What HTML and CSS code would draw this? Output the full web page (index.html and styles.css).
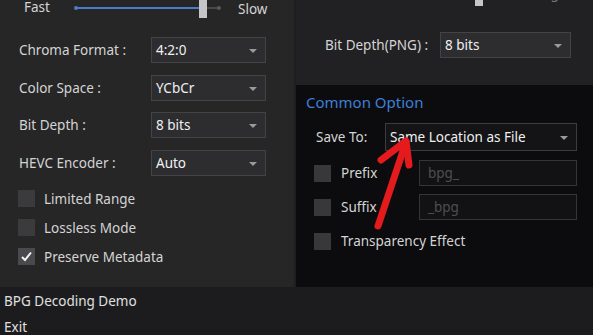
FILE: index.html
```html
<!DOCTYPE html>
<html>
<head>
<meta charset="utf-8">
<link rel="stylesheet" href="styles.css">
</head>
<body>
<div class="app">
  <div class="main">
    <div class="left">
      <div class="speed">
        <span class="fast">Fast</span>
        <div class="slider">
          <div class="track-blue"></div>
          <div class="thumb"></div>
          <div class="track-gray"></div>
          <div class="dot"></div>
        </div>
        <span class="slow">Slow</span>
      </div>
      <div class="form">
        <div class="row"><span class="label">Chroma Format :</span><div class="combo"><span>4:2:0</span><i class="caret"></i></div></div>
        <div class="row"><span class="label">Color Space :</span><div class="combo"><span>YCbCr</span><i class="caret"></i></div></div>
        <div class="row"><span class="label">Bit Depth :</span><div class="combo"><span>8 bits</span><i class="caret"></i></div></div>
        <div class="row"><span class="label">HEVC Encoder :</span><div class="combo"><span>Auto</span><i class="caret"></i></div></div>
      </div>
      <div class="checks">
        <div class="check"><span class="box"></span><span>Limited Range</span></div>
        <div class="check"><span class="box"></span><span>Lossless Mode</span></div>
        <div class="check"><span class="box checked"><svg viewBox="0 0 17 17" width="17" height="17"><path d="M4 9 L7 12 L13 4.5" fill="none" stroke="#f2f2f2" stroke-width="2"/></svg></span><span>Preserve Metadata</span></div>
      </div>
    </div>
    <div class="sep"></div>
    <div class="right">
      <div class="png">
        <div class="quality">
          <span class="lh low">Low</span>
          <div class="qthumb"></div>
          <span class="lh high">High</span>
        </div>
        <div class="row png-row"><span class="label png-label">Bit Depth(PNG) :</span><div class="combo wide"><span>8 bits</span><i class="caret"></i></div></div>
      </div>
      <div class="common">
        <div class="title">Common Option</div>
        <div class="save-row"><span class="save-label">Save To:</span><div class="combo dark"><span>Same Location as File</span><i class="caret"></i></div></div>
        <div class="opt-row"><span class="box"></span><span class="opt-label">Prefix</span><div class="input">bpg_</div></div>
        <div class="opt-row"><span class="box"></span><span class="opt-label">Suffix</span><div class="input">_bpg</div></div>
        <div class="opt-row"><span class="box"></span><span class="opt-label free">Transparency Effect</span></div>
      </div>
    </div>
  </div>
  <div class="menu">
    <div class="item">BPG Decoding Demo</div>
    <div class="item">Exit</div>
  </div>
  <svg class="arrow" width="593" height="335" viewBox="0 0 593 335">
    <path d="M378 226 L406 142" stroke="#e41a1c" stroke-width="7" stroke-linecap="round" fill="none"/>
    <path d="M381 160 L406 141 L409 165" stroke="#e41a1c" stroke-width="7" stroke-linecap="round" stroke-linejoin="round" fill="none"/>
  </svg>
</div>
</body>
</html>
```
FILE: styles.css
```css
* { box-sizing: border-box; }
html, body { margin: 0; padding: 0; }
body {
  width: 593px;
  height: 335px;
  overflow: hidden;
  background: #1c1c1e;
  font-family: "Noto Sans", "Open Sans", sans-serif;
  font-size: 13.5px;
  color: #d4d4d4;
}
.app { position: relative; width: 593px; height: 335px; }
.main { display: flex; height: 287px; }
.left { width: 294px; background: #262627; padding: 0 0 0 18px; }
.sep { width: 2px; background: #1e1e1f; }
.right { flex: 1; display: flex; flex-direction: column; }

.speed { display: flex; align-items: flex-start; height: 37px; }
.fast { margin: -2px 0 0 6px; width: 52px; }
.slider { position: relative; width: 146px; height: 18px; margin-top: 0; }
.track-blue { position: absolute; left: 0; top: 7px; width: 124px; height: 2px; background: #4a7bc8; }
.slider::before { content: ""; position: absolute; left: -2px; top: 6px; width: 4px; height: 4px; border-radius: 50%; background: #4a7bc8; }
.thumb { position: absolute; left: 123px; top: -1px; width: 8px; height: 19px; background: #c6c6c8; }
.track-gray { position: absolute; left: 131px; top: 7px; width: 12px; height: 2px; background: #4a4a4c; }
.dot { position: absolute; left: 141px; top: 6px; width: 4px; height: 4px; border-radius: 50%; background: #5a5a5c; }
.slow { margin: 0 0 0 16px; }

.form { display: flex; flex-direction: column; gap: 11.5px; }
.row { display: flex; align-items: center; height: 26px; }
.label { width: 133px; padding-left: 1px; }
.combo {
  position: relative;
  width: 115px; height: 26px;
  background: #2d2d30;
  border: 1px solid #434346;
  color: #f0f0f0;
  display: flex; align-items: center;
  padding-left: 4px;
  white-space: nowrap;
}
.caret {
  position: absolute; right: 8px; top: 11px;
  width: 0; height: 0;
  border-left: 4px solid transparent; border-right: 4px solid transparent;
  border-top: 4px solid #9a9a9c;
}

.checks { display: flex; flex-direction: column; gap: 11px; margin-top: 14px; }
.check { display: flex; align-items: center; height: 18px; gap: 9px; }
.box { width: 17px; height: 17px; background: #3b3b3d; flex: none; display: block; }
.box.checked { background: #4a4a4c; }
.box svg { display: block; }

.png { height: 85px; background: #212123; }
.quality { display: flex; height: 8px; align-items: flex-start; padding-left: 27px; }
.lh { color: #7a7a7c; margin-top: -16px; line-height: 19px; }
.low { width: 25px; }
.qthumb { width: 8px; height: 28px; background: #c6c6c8; margin: -22px 0 0 127px; }
.high { margin-left: 54px; }
.png-row { margin: 24px 0 0 28px; }
.png-label { width: 116px; }
.combo.wide { width: 131px; }

.common { flex: 1; background: #0c0c0e; padding: 7px 0 0 10px; }
.title { color: #3f7fd6; font-size: 15px; height: 23px; }
.save-row { display: flex; align-items: center; height: 28px; margin: 8px 0 0 10px; }
.save-label { width: 69px; }
.combo.dark { width: 192px; height: 28px; background: #141416; border-color: #3c3c3e; }
.combo.dark .caret { top: 12px; }
.opt-row { display: flex; align-items: center; height: 26px; margin: 9px 0 0 8px; }
.opt-row + .opt-row { margin-top: 8px; }
.opt-row .box { background: #38383a; }
.opt-label { margin-left: 10px; width: 78px; white-space: nowrap; }
.opt-label.free { width: auto; }
.input {
  width: 158px; height: 26px;
  background: #121214;
  border: 1px solid #353537;
  color: #4e4e50;
  padding-left: 8px;
  display: flex; align-items: center;
}

.menu { height: 48px; background: #1c1c1e; padding: 3px 0 0 4px; color: #e0e0e0; }
.item { height: 26px; line-height: 22px; }

.arrow { position: absolute; left: 0; top: 0; pointer-events: none; }
```
